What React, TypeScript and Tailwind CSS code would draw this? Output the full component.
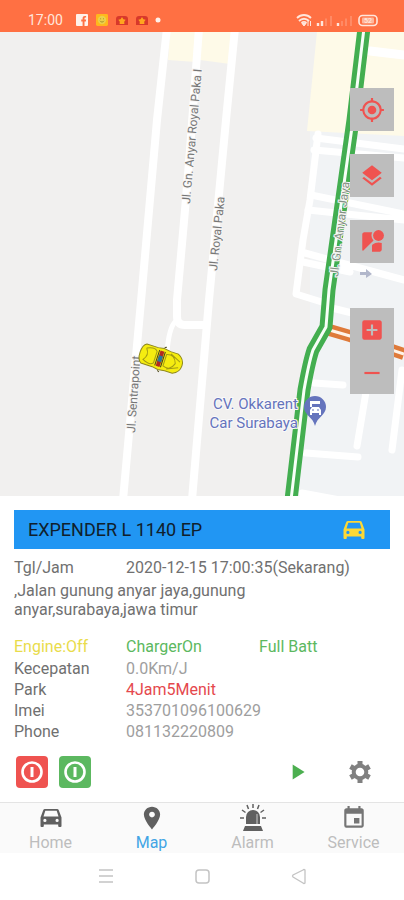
import type { ReactNode } from "react";
import { IoMdPin } from "react-icons/io";
import {
  MdAddBox,
  MdEvent,
  MdLayers,
  MdMyLocation,
  MdPlayArrow,
  MdRemove,
  MdStreetview,
} from "react-icons/md";

function CarIcon({ tone }: { tone: string }) {
  return (
    <svg className={`h-5 w-[22px] ${tone}`} viewBox="0 0 22 20" fill="currentColor" aria-hidden="true">
      <path
        fillRule="evenodd"
        d="M5 1h12q1.400 0 1.800 1.300L21.500 9.500V18q0 1-1 1h-1.300q-1 0-1-1v-1.500H3.800V18q0 1-1 1H1.500q-1 0-1-1V9.500L3.200 2.300Q3.600 1 5 1zM5.300 2.800L3.500 8.500h15L16.700 2.800zM4.900 10.800a1.600 1.600 0 1 0 0 3.200 1.600 1.600 0 0 0 0-3.200zM17.100 10.800a1.600 1.600 0 1 0 0 3.200 1.600 1.600 0 0 0 0-3.200z"
      />
    </svg>
  );
}

function GearIcon() {
  return (
    <svg className="size-6" viewBox="0 0 24 24" fill="none" stroke="currentColor" aria-hidden="true">
      <circle cx="12" cy="12" r="6.300" strokeWidth="4" />
      {[0, 60, 120].map((angle) => (
        <path key={angle} d="M12 1v4M12 19v4" strokeWidth="5" transform={`rotate(${angle} 12 12)`} />
      ))}
    </svg>
  );
}

function StatusBar() {
  return (
    <header className="flex h-8 items-center justify-between bg-[#ff7043] pt-2 pr-6 pl-7 text-[#ffe6dc]">
      <div className="flex items-center gap-2">
        <span className="mr-1 w-9 text-sm leading-5">17:00</span>
        <svg className="size-3" viewBox="0 0 12 12" aria-hidden="true">
          <rect width="12" height="12" rx="1" fill="#fff1ea" />
          <path d="M6.6 12V7.4H5.2V5.5h1.4V4.3c0-1.6.9-2.4 2.3-2.4h1.2v1.7h-.8c-.6 0-.8.3-.8.8v1.1h1.6l-.2 1.9H8.5V12z" fill="#ff7043" />
        </svg>
        <svg className="size-3" viewBox="0 0 13 13" aria-hidden="true">
          <rect width="13" height="13" rx="1.5" fill="#ffb81c" />
          <circle cx="6.5" cy="6.5" r="4.5" fill="#ecd04a" />
          <path d="M4.5 5.2h1M7.6 5.2h1M4.3 7.4c1 1.8 3.4 1.8 4.4 0" stroke="#9a8a2c" strokeWidth="0.9" fill="none" />
        </svg>
        {[0, 1].map((n) => (
          <svg key={n} className="size-3" viewBox="0 0 12 12" aria-hidden="true">
            <path d="M0 11V5c0-2 1-3 3-3h6c2 0 3 1 3 3v6z" fill="#d8382b" />
            <path d="M6 3l1.4 2.2 2.3.5-1.5 2 .2 2.3H3.6l.2-2.3-1.5-2 2.3-.5z" fill="#ffa51f" />
          </svg>
        ))}
        <svg className="-ml-1 size-3" viewBox="0 0 12 12" aria-hidden="true">
          <circle cx="6" cy="6" r="2.500" fill="#fff1ea" />
        </svg>
      </div>
      <svg className="h-4 w-[84px]" viewBox="0 0 84 16" aria-hidden="true" fill="none">
        <g stroke="#ffe6dc" strokeWidth="1.8">
          <path d="M1 6c4-4 10-4 14 0M3 9c3-3 7-3 10 0" />
          <path d="M5.5 11c1.5-1.4 3.5-1.4 5 0" />
        </g>
        <path d="M6 11.5l2 2.5 2-2.5zM12 9v5M14.5 9v5" fill="#ffe6dc" stroke="#ffe6dc" strokeWidth="1" />
        <path d="M22 11v3M26 9v5M42 11v3" stroke="#ffe6dc" strokeWidth="2.4" />
        <path d="M30 6.5v7.5M35 4v10M46 9v5M50 6.5v7.5M55 4v10" stroke="#ff9272" strokeWidth="1.5" />
        <rect x="63" y="3.500" width="18" height="10" rx="3.500" stroke="#ffe6dc" strokeWidth="1.600" />
        <rect x="66" y="5.500" width="12" height="6" rx="1" fill="#ffb69c" />
        <text x="72" y="11" textAnchor="middle" fontSize="7" fill="#fff1ea">52</text>
      </svg>
    </header>
  );
}

function CityMap() {
  return (
    <svg className="block w-full" viewBox="0 32 404 464" role="img" aria-label="Map">
      <rect y="32" width="404" height="464" fill="#f1f0ef" />
      <path d="M310 120L404 136V496H285L310 340z" fill="#f1f3f5" />
      <path d="M317 32H404V136L307 131z" fill="#fefae8" />
      <path d="M170 32H198L196 62L168 60z" fill="#fefae8" />
      <path d="M202 32H233L230 64L200 60z" fill="#fefae8" />

      <g stroke="#fff" fill="none" strokeLinecap="round" strokeLinejoin="round">
        <g strokeWidth="8">
          <path d="M167 28L157 120L142 290L123 500" />
          <path d="M235 28L226 120L209 300L192 500" />
          <path d="M199 28L190 150L185 210L177 300V316Q177 325 185 325H205" />
          <path d="M175 322Q169 328 167 352" strokeWidth="5" />
        </g>
        <g strokeWidth="7">
          <path d="M318 134L310 200L303 240L296 294L325 303" />
          <path d="M316 138L404 149M314 150L404 158" />
          <path d="M311 195L404 214M308 210L404 220" />
          <path d="M305 253L404 280M303 262L350 272" />
          <path d="M328 307L352 313M314 383L343 385M306 453L358 457" />
          <path d="M366 392L357 446M402 370L392 450M302 493L340 500" />
        </g>
        <path d="M370 51L404 55" strokeWidth="9" />
      </g>

      <g fill="none" strokeLinejoin="round">
        <path d="M326 329L350 336L404 354" stroke="#df7a3a" strokeWidth="12" />
        <path d="M326 329L350 336L404 354" stroke="#fff3e8" strokeWidth="3" />
        <path d="M364 28L353 120L329 290L326 327L313 350Q309 362 304 390L291 500" stroke="#43ae50" strokeWidth="13" />
        <path d="M364 28L353 120L329 290L326 327L313 350Q309 362 304 390L291 500" stroke="#f7fff7" strokeWidth="3" />
      </g>
      <path d="M360 272h6v-3l6 5-6 4v-3h-6z" fill="#b2b7cb" />

      <g fill="#777" stroke="#f6f5f4" strokeWidth="2" paintOrder="stroke" fontSize="12">
        <text transform="translate(190 204) rotate(-85)">Jl. Gn. Anyar Royal Paka I</text>
        <text transform="translate(217 271) rotate(-84)">Jl. Royal Paka</text>
        <text transform="translate(135 433) rotate(-86)">Jl. Sentrapoint</text>
        <text transform="translate(338 277) rotate(-83)" fill="#849184">Jl. Gn. Anyar Jaya</text>
      </g>

      <g fill="#6574bd" stroke="#fafafa" strokeWidth="2" paintOrder="stroke" fontSize="15" textAnchor="end">
        <text x="298" y="409">CV. Okkarent</text>
        <text x="298" y="428">Car Surabaya</text>
      </g>
      <path d="M315 426C313 417 304 415 304 407a11 11 0 0 1 22 0C326 415 317 417 315 426z" fill="#6574bd" />
      <path d="M310 401h10v3h-8v3h7l2 3v5h-2v-2h-7v2h-2v-5l2-3h-2z" fill="#fff" />
      <path d="M312 410h2M317 410h2" stroke="#6574bd" />

      <g transform="translate(161 359) rotate(18)">
        <path d="M-18-10H-6L0-11L7-10H15Q22-7 22 0T15 10H7L0 11L-6 10H-18Q-22 8-22 0T-18-10z" fill="#f5ec10" stroke="#8f881c" />
        <path d="M-17-6Q-9-10-6-6V6Q-9 10-17 6Q-12 0-17-6M4-6Q12-9 15 0Q12 9 4 6zM8-8L19-3M8 8L19 3" fill="none" stroke="#a39b15" />
        <rect x="-3" y="-8" width="4" height="16" fill="#b32a20" />
        <rect x="-3" y="-3" width="4" height="6" fill="#28799c" />
        <path d="M-4-8V8M2-8V8M0-12l2-1M0 12l2 1" stroke="#4a4515" />
      </g>
    </svg>
  );
}

function MapButton({ label, children }: { label: string; children: ReactNode }) {
  return (
    <button type="button" aria-label={label} className="flex h-[43px] w-11 items-center justify-center bg-[#bdbdbd]">
      {children}
    </button>
  );
}

function MapPanel() {
  return (
    <main className="relative overflow-hidden">
      <CityMap />
      <div className="absolute top-14 right-2.5 flex flex-col gap-[23px] text-[#ef5350]">
        <MapButton label="My location"><MdMyLocation className="size-[26px]" /></MapButton>
        <MapButton label="Layers"><MdLayers className="size-[26px]" /></MapButton>
        <MapButton label="Street view"><MdStreetview className="size-[26px]" /></MapButton>
        <div className="mt-[22px] flex flex-col">
          <MapButton label="Zoom in"><MdAddBox className="size-[26px]" /></MapButton>
          <MapButton label="Zoom out"><MdRemove className="size-[26px]" /></MapButton>
        </div>
      </div>
    </main>
  );
}

const details = [
  { label: "Kecepatan", value: "0.0Km/J", tone: "text-[#9e9e9e]" },
  { label: "Park", value: "4Jam5Menit", tone: "text-[#e5484d]" },
  { label: "Imei", value: "353701096100629", tone: "text-[#9e9e9e]" },
  { label: "Phone", value: "081132220809", tone: "text-[#9e9e9e]" },
];

function PowerButton({ label, tone }: { label: string; tone: string }) {
  return (
    <button type="button" aria-label={label} className={`flex size-8 items-center justify-center rounded ${tone}`}>
      <svg className="size-6" viewBox="0 0 24 24" fill="none" stroke="#fff" aria-hidden="true">
        <circle cx="12" cy="12" r="9.500" strokeWidth="2.600" />
        <path d="M12 7v10" strokeWidth="3" />
      </svg>
    </button>
  );
}

function VehicleCard() {
  return (
    <section className="bg-white p-3.5 text-[#707070]">
      <h1 className="mb-2 flex h-[39px] items-center justify-between bg-[#2196f3] pr-[25px] pl-3.5 text-lg text-[#10202c]">
        EXPENDER L 1140 EP
        <CarIcon tone="text-[#fdd835]" />
      </h1>
      <div className="grid grid-cols-[112px_1fr] leading-[22px]">
        <span>Tgl/Jam</span>
        <span>2020-12-15 17:00:35(Sekarang)</span>
      </div>
      <p className="mt-0.5 w-64 leading-[19px]">,Jalan gunung anyar jaya,gunung anyar,surabaya,jawa timur</p>
      <div className="mt-[17px] grid grid-cols-[112px_133px_1fr] leading-[22px]">
        <span className="text-[#e9dc4b]">Engine:Off</span>
        <span className="text-[#5cb860]">ChargerOn</span>
        <span className="text-[#5cb860]">Full Batt</span>
      </div>
      <dl className="grid grid-cols-[112px_1fr] leading-[21px]">
        {details.map((row) => (
          <div key={row.label} className="contents">
            <dt>{row.label}</dt>
            <dd className={row.tone}>{row.value}</dd>
          </div>
        ))}
      </dl>
      <div className="mt-3.5 flex items-center justify-between pr-[18px] pl-0.5">
        <div className="flex gap-[11px]">
          <PowerButton label="Engine off" tone="bg-[#ef5350]" />
          <PowerButton label="Engine on" tone="bg-[#5cb860]" />
        </div>
        <div className="flex items-center gap-[38px]">
          <button type="button" aria-label="Play" className="text-[#4caf50]"><MdPlayArrow className="size-[26px]" /></button>
          <button type="button" aria-label="Settings" className="text-[#808080]"><GearIcon /></button>
        </div>
      </div>
    </section>
  );
}

function SirenIcon() {
  return (
    <svg className="size-7" viewBox="0 0 28 28" aria-hidden="true">
      <path d="M7 20V13a7 7 0 0 1 14 0v7z" fill="#606060" />
      <path d="M18 10v10" stroke="#aaa" strokeWidth="1.5" />
      <path d="M6 22h16l2 5H4z" fill="#606060" />
      <path d="M14 0v4M8 1l1.5 4M20 1l-1.5 4M3 6l3.5 2.5M25 6l-3.500 2.500M1 14h4M23 14h4" stroke="#606060" strokeWidth="1.5" />
    </svg>
  );
}

const tabs = [
  { label: "Home", tone: "text-[#bdbdbd]", icon: <CarIcon tone="text-[#606060]" /> },
  { label: "Map", tone: "text-[#42a5e5]", icon: <IoMdPin className="size-[26px] text-[#606060]" /> },
  { label: "Alarm", tone: "text-[#bdbdbd]", icon: <SirenIcon /> },
  { label: "Service", tone: "text-[#bdbdbd]", icon: <MdEvent className="size-[26px] text-[#757575]" /> },
];

export default function App() {
  return (
    <div className="min-h-screen bg-white font-[Roboto,sans-serif] text-base">
      <StatusBar />
      <MapPanel />
      <VehicleCard />
      <nav className="grid grid-cols-4 border-t border-[#e4e4e4] bg-[#fafafa]">
        {tabs.map((tab) => (
          <a key={tab.label} href={`#${tab.label}`} className={`flex flex-col items-center ${tab.tone}`}>
            <span className="flex h-[29px] items-center">{tab.icon}</span>
            <span className="leading-[21px]">{tab.label}</span>
          </a>
        ))}
      </nav>
      <footer className="flex h-12 items-center justify-center gap-[76px] text-[#c4c4c4]">
        <button type="button" aria-label="Recent apps">
          <svg className="size-5" viewBox="0 0 20 20" fill="none" stroke="currentColor" aria-hidden="true">
            <path d="M3 3h14M3 9h14M3 15h14" strokeWidth="1.5" />
          </svg>
        </button>
        <button type="button" aria-label="Home screen">
          <svg className="size-5" viewBox="0 0 20 20" fill="none" stroke="currentColor" aria-hidden="true">
            <rect x="4" y="3" width="13" height="13" rx="3" strokeWidth="1.5" />
          </svg>
        </button>
        <button type="button" aria-label="Back">
          <svg className="size-5" viewBox="0 0 20 20" fill="none" stroke="currentColor" aria-hidden="true">
            <path d="M17 3v13q-1 1-2 0L5 10q-1-1 0-2L15 3q1-1 2 0z" strokeWidth="1.3" />
          </svg>
        </button>
      </footer>
    </div>
  );
}
